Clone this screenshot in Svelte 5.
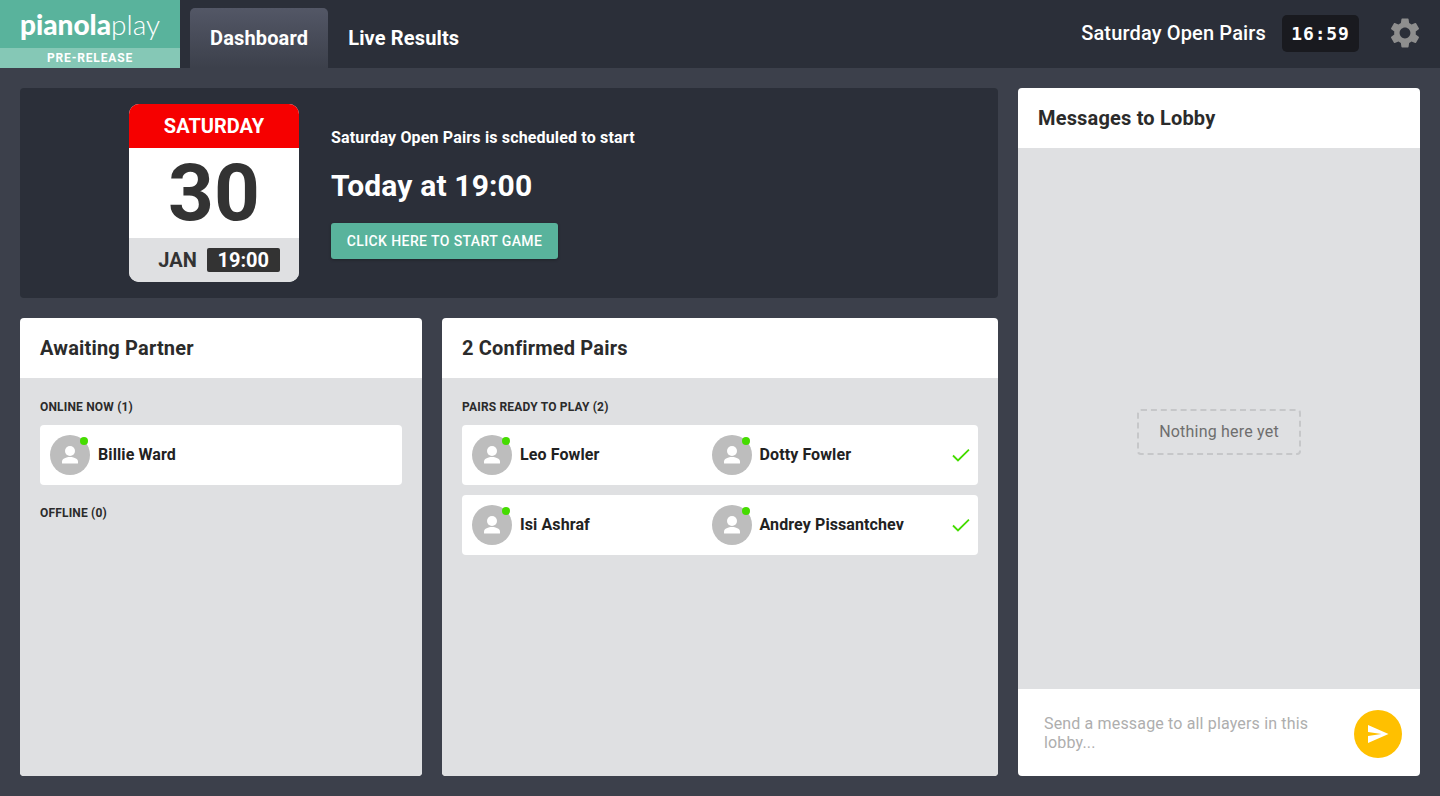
<script>
  const ready = [
    ["Leo Fowler", "Dotty Fowler"],
    ["Isi Ashraf", "Andrey Pissantchev"],
  ];
</script>

{#snippet player(name)}
  <div class="player">
    <div class="avatar">
      <svg viewBox="0 0 40 40" width="40" height="40">
        <circle cx="20" cy="16" r="5" fill="#fff" />
        <path d="M12 28 v-1.5 c0-3 4.5-4.5 8-4.5 s8 1.500 8 4.500 v1.500 q0 0.500-0.500 0.500 h-15 q-0.500 0-0.500-0.500z" fill="#fff" />
      </svg>
      <span class="dot"></span>
    </div>
    <span class="name">{name}</span>
  </div>
{/snippet}

<div class="page">
  <header>
    <div class="logo">
      <div class="wordmark"><b>pianola</b><span>play</span></div>
      <div class="pre">PRE-RELEASE</div>
    </div>
    <nav>
      <a class="tab active" href="#dashboard">Dashboard</a>
      <a class="tab" href="#results">Live Results</a>
    </nav>
    <div class="right">
      <span class="event">Saturday Open Pairs</span>
      <span class="clock">16:59</span>
      <svg class="gear" viewBox="0 0 24 24" width="36" height="36">
        <path fill="#8e8e8e" d="M19.14 12.94c.04-.3.06-.61.06-.94 0-.32-.02-.64-.07-.94l2.03-1.58a.49.49 0 0 0 .12-.61l-1.92-3.32a.488.488 0 0 0-.59-.22l-2.39.96c-.5-.38-1.03-.7-1.62-.94l-.36-2.54a.484.484 0 0 0-.48-.41h-3.84c-.24 0-.43.17-.47.41l-.36 2.54c-.59.24-1.13.57-1.62.94l-2.39-.96c-.22-.08-.47 0-.59.22L2.74 8.87c-.12.21-.08.47.12.61l2.03 1.58c-.05.3-.09.63-.09.94s.02.64.07.94l-2.03 1.58a.49.49 0 0 0-.12.61l1.92 3.32c.12.22.37.29.59.22l2.39-.96c.5.38 1.030.7 1.620.94l.36 2.54c.05.24.24.41.48.41h3.84c.24 0 .44-.17.47-.41l.36-2.54c.59-.24 1.13-.56 1.62-.94l2.39.96c.22.08.47 0 .59-.22l1.92-3.32c.12-.22.07-.47-.12-.61l-2.010-1.58zM12 15.6c-1.98 0-3.6-1.62-3.6-3.6s1.62-3.6 3.6-3.6 3.6 1.62 3.6 3.6-1.62 3.6-3.6 3.6z" />
      </svg>
    </div>
  </header>

  <main>
    <div class="left">
      <section class="banner">
        <div class="calendar">
          <div class="day">SATURDAY</div>
          <div class="date">30</div>
          <div class="cal-foot">
            <span class="month">JAN</span>
            <span class="time">19:00</span>
          </div>
        </div>
        <div class="info">
          <p class="scheduled">Saturday Open Pairs is scheduled to start</p>
          <h1>Today at 19:00</h1>
          <button class="start">CLICK HERE TO START GAME</button>
        </div>
      </section>

      <div class="panels">
        <section class="panel awaiting">
          <h2>Awaiting Partner</h2>
          <div class="body">
            <h3>ONLINE NOW (1)</h3>
            <div class="row">{@render player("Billie Ward")}</div>
            <h3 class="offline">OFFLINE (0)</h3>
          </div>
        </section>

        <section class="panel pairs">
          <h2>2 Confirmed Pairs</h2>
          <div class="body">
            <h3>PAIRS READY TO PLAY (2)</h3>
            {#each ready as pair}
              <div class="row">
                {@render player(pair[0])}
                {@render player(pair[1])}
                <svg class="tick" viewBox="0 0 20 16" width="20" height="16">
                  <path d="M2 8.500 L7 13.500 L18 2.500" fill="none" stroke="#45dc00" stroke-width="1.800" />
                </svg>
              </div>
            {/each}
          </div>
        </section>
      </div>
    </div>

    <section class="panel messages">
      <h2>Messages to Lobby</h2>
      <div class="body empty">
        <div class="nothing">Nothing here yet</div>
      </div>
      <div class="composer">
        <div class="placeholder">Send a message to all players in this lobby...</div>
        <button class="send" aria-label="Send">
          <svg viewBox="0 0 24 24" width="24" height="24">
            <path fill="#fff" d="M2 3 L22.500 12 L2 21 V14 L15.500 12 L2 10z" />
          </svg>
        </button>
      </div>
    </section>
  </main>
</div>

<style>
  :global(body) {
    background: #3c404b;
    font-family: Roboto, sans-serif;
  }
  .page {
    height: 796px;
    display: flex;
    flex-direction: column;
    overflow: hidden;
  }
  header {
    height: 68px;
    flex: none;
    display: flex;
    background: #2b2f39;
  }
  .logo {
    width: 180px;
    display: flex;
    flex-direction: column;
    color: #fff;
  }
  .wordmark {
    height: 48px;
    background: #59b39c;
    display: flex;
    justify-content: center;
    align-items: center;
    font-family: Lato, sans-serif;
    font-size: 28px;
    line-height: 48px;
    box-sizing: border-box;
  }
  .wordmark b {
    font-weight: 900;
  }
  .wordmark span {
    font-weight: 300;
  }
  .pre {
    height: 20px;
    background: #85c8b6;
    text-align: center;
    font-size: 12px;
    font-weight: 700;
    line-height: 20px;
    letter-spacing: 0.85px;
  }
  nav {
    display: flex;
    margin-left: 10px;
    align-items: flex-end;
  }
  .tab {
    height: 60px;
    padding: 0 20px;
    color: #fff;
    text-decoration: none;
    font-size: 20px;
    font-weight: 700;
    letter-spacing: 0.15px;
    line-height: 60px;
    border-radius: 5px 5px 0 0;
  }
  .tab.active {
    background: linear-gradient(#535766, #3c404b);
  }
  .right {
    margin-left: auto;
    display: flex;
    align-items: center;
    padding-right: 17px;
    padding-bottom: 2px;
    color: #fff;
  }
  .event {
    font-size: 20px;
    font-weight: 500;
    letter-spacing: 0.15px;
  }
  .clock {
    margin-left: 16px;
    width: 77px;
    height: 37px;
    background: #191a1f;
    border-radius: 5px;
    text-align: center;
    font-family: "DejaVu Sans Mono", monospace;
    font-size: 18px;
    font-weight: 700;
    letter-spacing: 0.9px;
    line-height: 37px;
  }
  .gear {
    margin-left: 28px;
    display: block;
  }
  main {
    flex: 1;
    display: flex;
    gap: 20px;
    padding: 20px;
    min-height: 0;
  }
  .left {
    width: 978px;
    display: flex;
    flex-direction: column;
    gap: 20px;
  }
  .banner {
    height: 210px;
    flex: none;
    box-sizing: border-box;
    padding: 16px 0 16px 109px;
    background: #2b2f39;
    border-radius: 4px;
    display: flex;
    gap: 32px;
    color: #fff;
  }
  .calendar {
    width: 170px;
    height: 178px;
    border-radius: 10px;
    overflow: hidden;
    background: #fff;
    display: flex;
    flex-direction: column;
    text-align: center;
  }
  .day {
    height: 44px;
    background: #f60000;
    font-size: 20px;
    font-weight: 700;
    line-height: 44px;
  }
  .date {
    height: 90px;
    color: #333;
    font-size: 80px;
    font-weight: 700;
    line-height: 90px;
  }
  .cal-foot {
    height: 44px;
    box-sizing: border-box;
    padding-left: 10px;
    background: #dfe0e2;
    display: flex;
    justify-content: center;
    align-items: center;
    gap: 10px;
    color: #333;
    font-size: 20px;
    font-weight: 700;
  }
  .time {
    width: 73px;
    height: 24px;
    background: #333;
    color: #fff;
    border-radius: 2px;
    line-height: 24px;
  }
  .info {
    display: flex;
    flex-direction: column;
    align-items: flex-start;
  }
  .scheduled {
    margin: 24px 0 0;
    font-size: 16px;
    font-weight: 700;
    letter-spacing: 0.16px;
    line-height: 20px;
  }
  h1 {
    margin: 20px 0 0;
    font-size: 30px;
    font-weight: 700;
    letter-spacing: 0.15px;
    line-height: 36px;
  }
  .start {
    margin-top: 19px;
    width: 227px;
    height: 36px;
    border: 0;
    border-radius: 3px;
    background: #59b39c;
    color: #fff;
    font-family: inherit;
    font-size: 14px;
    font-weight: 500;
    letter-spacing: 0.4px;
    box-shadow: 0 1px 3px rgba(0, 0, 0, 0.3);
  }
  .panels {
    flex: 1;
    display: flex;
    gap: 20px;
    min-height: 0;
  }
  .panel {
    display: flex;
    flex-direction: column;
    border-radius: 4px;
    overflow: hidden;
    background: #fff;
  }
  .awaiting {
    width: 402px;
  }
  .pairs {
    flex: 1;
  }
  .messages {
    flex: 1;
  }
  h2 {
    flex: none;
    margin: 0;
    height: 60px;
    padding: 0 20px;
    color: #2b2b2b;
    font-size: 20px;
    font-weight: 700;
    letter-spacing: 0.18px;
    line-height: 60px;
  }
  .body {
    flex: 1;
    background: #dfe0e2;
    padding: 20px;
  }
  h3 {
    margin: 0 0 9px;
    height: 18px;
    color: #2b2b2b;
    font-size: 12px;
    font-weight: 700;
    letter-spacing: 0.18px;
    line-height: 18px;
  }
  .offline {
    margin-top: 19px;
  }
  .row {
    position: relative;
    height: 60px;
    margin-bottom: 10px;
    padding: 0 10px;
    background: #fff;
    border-radius: 4px;
    display: flex;
    align-items: center;
  }
  .player {
    width: 240px;
    display: flex;
    align-items: center;
    gap: 8px;
  }
  .avatar {
    position: relative;
    width: 40px;
    height: 40px;
    border-radius: 50%;
    background: #bdbdbd;
  }
  .avatar svg {
    display: block;
  }
  .dot {
    position: absolute;
    top: 2px;
    right: 2px;
    width: 8px;
    height: 8px;
    border-radius: 50%;
    background: #45dc00;
  }
  .name {
    color: #222;
    font-size: 16px;
    font-weight: 700;
    letter-spacing: 0.1px;
    line-height: 18px;
  }
  .tick {
    margin-left: auto;
    margin-right: -3px;
    display: block;
  }
  .empty {
    display: flex;
    justify-content: center;
    align-items: center;
    padding-top: 46px;
  }
  .nothing {
    box-sizing: border-box;
    width: 164px;
    height: 46px;
    border: 2px dashed #c6c7c9;
    border-radius: 4px;
    color: #6e6e6e;
    text-align: center;
    font-size: 16px;
    letter-spacing: 0.2px;
    line-height: 42px;
  }
  .composer {
    flex: none;
    height: 87px;
    box-sizing: border-box;
    padding: 2px 18px 0 26px;
    display: flex;
    align-items: center;
    justify-content: space-between;
  }
  .placeholder {
    width: 280px;
    margin-top: -2px;
    color: #aeaeae;
    font-size: 16px;
    letter-spacing: 0.16px;
    line-height: 19px;
  }
  .send {
    width: 48px;
    height: 48px;
    padding: 0;
    border: 0;
    border-radius: 50%;
    background: #ffc000;
    display: flex;
    justify-content: center;
    align-items: center;
  }
</style>
